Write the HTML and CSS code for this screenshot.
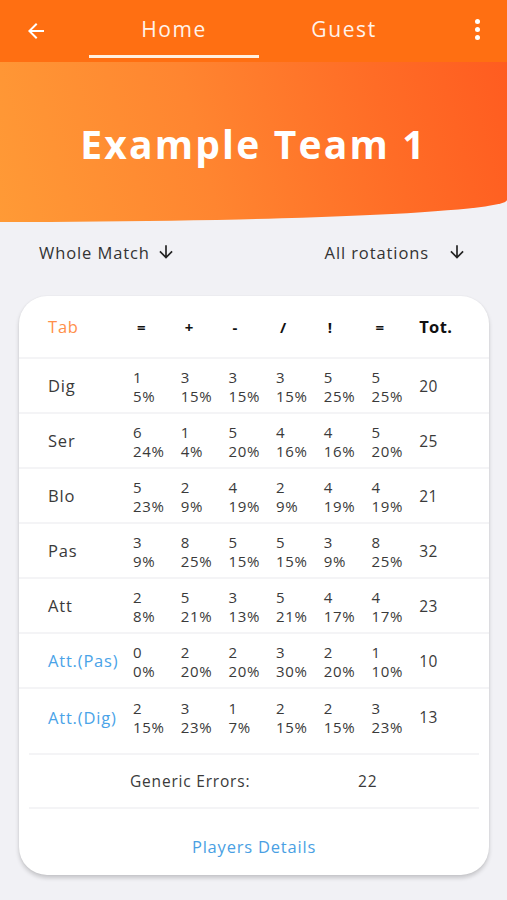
FILE: index.html
```html
<!DOCTYPE html>
<html>
<head>
<meta charset="utf-8">
<link rel="stylesheet" href="styles.css">
</head>
<body>
<div class="app">
  <header class="topbar">
    <div class="back">
      <svg width="24" height="24" viewBox="0 0 24 24"><path d="M20 11H7.83l5.59-5.59L12 4l-8 8 8 8 1.41-1.41L7.830 13H20v-2z" fill="#fff"/></svg>
    </div>
    <div class="tab active">Home</div>
    <div class="tab">Guest</div>
    <div class="menu">
      <span class="dot"></span><span class="dot"></span><span class="dot"></span>
    </div>
  </header>
  <section class="banner">
    <h1>Example Team 1</h1>
  </section>
  <div class="filters">
    <div class="filter">Whole Match
      <svg width="20" height="20" viewBox="0 0 24 24"><path d="M20 12l-1.41-1.41L13 16.17V4h-2v12.17l-5.58-5.59L4 12l8 8 8-8z" fill="#222"/></svg>
    </div>
    <div class="filter rot">All rotations
      <svg width="20" height="20" viewBox="0 0 24 24"><path d="M20 12l-1.41-1.41L13 16.17V4h-2v12.17l-5.58-5.59L4 12l8 8 8-8z" fill="#222"/></svg>
    </div>
  </div>
  <div class="card">
    <div class="row head">
      <div class="lab tabl">Tab</div>
      <div class="h">=</div><div class="h">+</div><div class="h">-</div><div class="h">/</div><div class="h">!</div><div class="h">=</div>
      <div class="tot h">Tot.</div>
    </div>
    <div class="row">
      <div class="lab">Dig</div>
      <div class="v"><span>1</span><span>5%</span></div><div class="v"><span>3</span><span>15%</span></div><div class="v"><span>3</span><span>15%</span></div><div class="v"><span>3</span><span>15%</span></div><div class="v"><span>5</span><span>25%</span></div><div class="v"><span>5</span><span>25%</span></div>
      <div class="tot">20</div>
    </div>
    <div class="row">
      <div class="lab">Ser</div>
      <div class="v"><span>6</span><span>24%</span></div><div class="v"><span>1</span><span>4%</span></div><div class="v"><span>5</span><span>20%</span></div><div class="v"><span>4</span><span>16%</span></div><div class="v"><span>4</span><span>16%</span></div><div class="v"><span>5</span><span>20%</span></div>
      <div class="tot">25</div>
    </div>
    <div class="row">
      <div class="lab">Blo</div>
      <div class="v"><span>5</span><span>23%</span></div><div class="v"><span>2</span><span>9%</span></div><div class="v"><span>4</span><span>19%</span></div><div class="v"><span>2</span><span>9%</span></div><div class="v"><span>4</span><span>19%</span></div><div class="v"><span>4</span><span>19%</span></div>
      <div class="tot">21</div>
    </div>
    <div class="row">
      <div class="lab">Pas</div>
      <div class="v"><span>3</span><span>9%</span></div><div class="v"><span>8</span><span>25%</span></div><div class="v"><span>5</span><span>15%</span></div><div class="v"><span>5</span><span>15%</span></div><div class="v"><span>3</span><span>9%</span></div><div class="v"><span>8</span><span>25%</span></div>
      <div class="tot">32</div>
    </div>
    <div class="row">
      <div class="lab">Att</div>
      <div class="v"><span>2</span><span>8%</span></div><div class="v"><span>5</span><span>21%</span></div><div class="v"><span>3</span><span>13%</span></div><div class="v"><span>5</span><span>21%</span></div><div class="v"><span>4</span><span>17%</span></div><div class="v"><span>4</span><span>17%</span></div>
      <div class="tot">23</div>
    </div>
    <div class="row">
      <div class="lab blue">Att.(Pas)</div>
      <div class="v"><span>0</span><span>0%</span></div><div class="v"><span>2</span><span>20%</span></div><div class="v"><span>2</span><span>20%</span></div><div class="v"><span>3</span><span>30%</span></div><div class="v"><span>2</span><span>20%</span></div><div class="v"><span>1</span><span>10%</span></div>
      <div class="tot">10</div>
    </div>
    <div class="row last">
      <div class="lab blue">Att.(Dig)</div>
      <div class="v"><span>2</span><span>15%</span></div><div class="v"><span>3</span><span>23%</span></div><div class="v"><span>1</span><span>7%</span></div><div class="v"><span>2</span><span>15%</span></div><div class="v"><span>2</span><span>15%</span></div><div class="v"><span>3</span><span>23%</span></div>
      <div class="tot">13</div>
    </div>
    <div class="generic">
      <span class="gl">Generic Errors:</span>
      <span class="gv">22</span>
    </div>
    <div class="details">Players Details</div>
  </div>
</div>
</body>
</html>
```
FILE: styles.css
```css
* { box-sizing: border-box; }
html, body { margin: 0; padding: 0; }
body {
  background: #f1f1f5;
  font-family: "Open Sans", "DejaVu Sans", sans-serif;
  color: #333;
  width: 507px;
  height: 900px;
  overflow: hidden;
}
.topbar {
  height: 62px;
  background: #ff6f12;
  display: grid;
  grid-template-columns: 89px 170px 170px 1fr;
  align-items: stretch;
  color: #fff;
}
.back {
  display: flex;
  align-items: center;
  padding-left: 24px;
}
.tab {
  display: flex;
  align-items: center;
  justify-content: center;
  font-size: 21px;
  letter-spacing: 1.6px;
  color: #fff3ea;
  padding-top: 2px;
  border-bottom: 3px solid transparent;
  margin-bottom: 4px;
}
.tab.active { border-bottom-color: #fff0e0; }
.menu {
  display: flex;
  flex-direction: column;
  align-items: flex-end;
  justify-content: center;
  gap: 3px;
  padding-right: 27px;
  padding-bottom: 4px;
}
.dot {
  width: 5px;
  height: 5px;
  border-radius: 50%;
  background: #fff;
}
.banner {
  height: 160px;
  background: linear-gradient(75deg, #ff9a36 0%, #ff8530 40%, #ff6c26 75%, #ff5c20 100%);
  border-bottom-right-radius: 100% 22px;
  display: flex;
  align-items: center;
  justify-content: center;
}
.banner h1 {
  margin: 0;
  color: #fff;
  font-size: 39px;
  font-weight: 700;
  letter-spacing: 2.2px;
  padding-top: 2px;
}
.filters {
  height: 74px;
  display: flex;
  justify-content: space-between;
  align-items: center;
  padding: 0 40px 14px 39px;
}
.filter {
  display: flex;
  align-items: center;
  gap: 6px;
  font-size: 16.5px;
  letter-spacing: 0.9px;
  color: #333;
}
.filter.rot { gap: 18px; }
.card {
  margin: 0 18px 0 19px;
  background: #fff;
  border-radius: 28px;
  box-shadow: 0 3px 4px rgba(0,0,0,0.18), 0 0 2px rgba(0,0,0,0.06);
}
.row {
  display: grid;
  grid-template-columns: 85px repeat(6, 47.7px) 1fr;
  align-items: center;
  height: 55px;
  padding-left: 29px;
  border-bottom: 2px solid #f4f4f6;
  font-size: 15px;
  color: #3a3a3a;
}
.row.head { height: 63px; }
.row.last { height: 64px; align-items: start; padding-top: 7px; border-bottom: none; }
.row.last .lab, .row.last .tot { margin-top: 10px; }
.lab { font-size: 16.5px; letter-spacing: 0.8px; white-space: nowrap; }
.tabl { color: #ff8f4a; }
.blue { color: #4aa3e8; }
.h { font-weight: 700; color: #111; font-size: 15px; padding-left: 4px; }
.tot.h { padding-left: 0; font-size: 16.5px; letter-spacing: 0.4px; }
.v { display: flex; flex-direction: column; gap: 0; letter-spacing: 0.7px; padding-top: 2px; }
.v span { line-height: 20.5px; height: 20.5px; }
.v span + span { margin-top: -1.5px; }
.tot { font-size: 15.5px; letter-spacing: 0.6px; }
.generic {
  height: 56px;
  margin: 0 10px;
  border-top: 2px solid #f4f4f6;
  border-bottom: 2px solid #f4f4f6;
  display: flex;
  align-items: center;
  padding-left: 101px;
  font-size: 15.5px;
  color: #3a3a3a;
  letter-spacing: 0.8px;
}
.gl { width: 228px; }
.details {
  height: 66px;
  display: flex;
  align-items: center;
  justify-content: center;
  color: #4a9fe3;
  font-size: 16.5px;
  letter-spacing: 0.8px;
  padding-top: 8px;
}
```
